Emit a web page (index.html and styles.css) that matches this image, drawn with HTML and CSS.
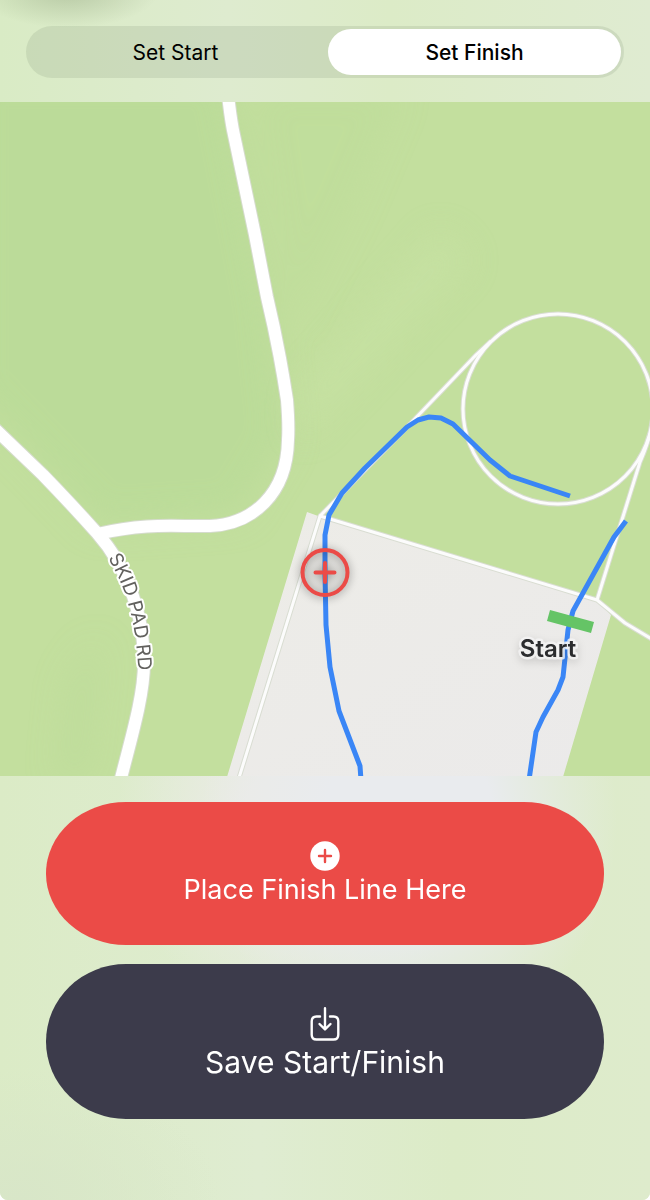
FILE: index.html
```html
<!DOCTYPE html>
<html lang="en">
  <head>
    <meta charset="UTF-8">
    <meta name="viewport" content="width=device-width, initial-scale=1">
    <title>Set Start/Finish</title>
    <link rel="stylesheet" href="styles.css">
  </head>
  <body>
    <div class="screen">
      <div class="top-bar">
        <div class="segmented" role="radiogroup" aria-label="Line to place">
          <input type="radio" name="line" id="set-start">
          <label for="set-start">Set Start</label>
          <input type="radio" name="line" id="set-finish" checked>
          <label for="set-finish">Set Finish</label>
        </div>
      </div>

      <svg class="map" viewBox="0 102 650 674" role="img" aria-label="Track map">
        <defs>
          <filter id="soft" x="-30%" y="-30%" width="160%" height="160%">
            <feGaussianBlur stdDeviation="16" />
          </filter>
          <linearGradient id="lot" x1="0" y1="0" x2="1" y2="1">
            <stop offset="0" stop-color="#edece7" />
            <stop offset="1" stop-color="#ebeaea" />
          </linearGradient>
          <path id="road-name" d="M108 558 C121 580 138 613 139 690" />
        </defs>

        <!-- terrain -->
        <rect class="grass" y="102" width="650" height="674" />
        <g class="shade" filter="url(#soft)">
          <path d="M-30 70 H225 L270 300 L285 440 L240 515 L100 525 L-30 390 Z" />
          <path d="M255 90 L400 90 L350 210 L290 330 Z" opacity=".4" />
          <path d="M70 680 L100 640 L85 776 L60 776 Z" opacity=".6" />
        </g>
        <path class="ridge" filter="url(#soft)" d="M300 440 L470 260 L440 230 L300 390 Z" />

        <polygon points="307,512 321,517 597,600 611,615 563,777 227,777" fill="url(#lot)" />

        <!-- roads: casing first, then the white on top -->
        <g class="road-casing">
          <path d="M228 95 Q231 122 234 135 L255 235 L267 297 Q279 347 287 400 Q289 425 288 440 C287 495 252 524 210 526 C177 527 150 522 97 534" />
          <path d="M-6 428 L43 475 Q73 506 97 533 C130 570 144 620 144 663 C144 695 132 735 120 782" />
        </g>
        <g class="path-casing">
          <circle cx="558" cy="409" r="95" />
          <path d="M320 516 L410 424 L476 355 L491 341" />
          <path d="M652 428 Q646 449 640 462 L597 600" />
          <path d="M238 781 L320 516 L597 600 L625 623 L655 641" />
        </g>
        <g class="road">
          <path d="M228 95 Q231 122 234 135 L255 235 L267 297 Q279 347 287 400 Q289 425 288 440 C287 495 252 524 210 526 C177 527 150 522 97 534" />
          <path d="M-6 428 L43 475 Q73 506 97 533 C130 570 144 620 144 663 C144 695 132 735 120 782" />
        </g>
        <g class="path">
          <circle cx="558" cy="409" r="95" />
          <path d="M320 516 L410 424 L476 355 L491 341" />
          <path d="M652 428 Q646 449 640 462 L597 600" />
          <path d="M238 781 L320 516 L597 600 L625 623 L655 641" />
        </g>
        <text class="road-label"><textPath href="#road-name">SKID PAD RD</textPath></text>

        <!-- recorded track -->
        <g class="track">
          <path d="M361 780 L360 766 L339 711 L330 667 L326 625 L325 572 L325 535 L329 515 L342 493 L365 468 L407 427 L418 420 L429 417 L441 418 L453 424 L490 460 L510 476 L570 496" />
          <path d="M626 521 L614 537 L573 611 L568 630 L563 677 L558 690 L543 717 L536 732 L529 780" />
        </g>

        <polygon class="start-line" points="550,610 594,622 591,633 547,621" />
        <text class="start-label" x="548" y="657">Start</text>

        <g class="crosshair">
          <circle cx="325" cy="572.5" r="22.5" />
          <path d="M315.5 572.5 H334.5 M325 563 V582" />
        </g>
      </svg>

      <div class="actions">
        <button type="button" class="place">
          <svg width="30" height="30" viewBox="0 0 30 30" aria-hidden="true">
            <circle cx="15" cy="15" r="14.7" fill="#fff" />
            <path d="M9 15 H21 M15 9 V21" stroke="#eb4b47" stroke-width="2.4" stroke-linecap="round" />
          </svg>
          <span>Place Finish Line Here</span>
        </button>
        <button type="button" class="save">
          <svg width="30" height="34" viewBox="0 0 30 34" aria-hidden="true">
            <g fill="none" stroke="#fff" stroke-width="2.4" stroke-linecap="round" stroke-linejoin="round">
              <path d="M10 9.5 H6.5 Q1.7 9.5 1.7 14.3 V27.7 Q1.7 32.5 6.5 32.5 H23.5 Q28.3 32.5 28.3 27.7 V14.3 Q28.3 9.5 23.5 9.5 H20" />
              <path d="M15 1.3 V22 M9.5 17 L15 22.4 L20.5 17" />
            </g>
          </svg>
          <span>Save Start/Finish</span>
        </button>
      </div>
    </div>
  </body>
</html>
```
FILE: styles.css
```css
* {
  box-sizing: border-box;
}
body {
  margin: 0;
  background: #fff;
  font-family: Inter, "Liberation Sans", sans-serif;
}
.screen {
  display: flex;
  flex-direction: column;
  min-height: 100vh;
  overflow: hidden;
  border-radius: 0 0 8px 8px;
  background: #ddebc9;
}

/* top bar */
.top-bar {
  padding: 26px 26px 24px;
  background:
    radial-gradient(ellipse 90px 36px at 68px -8px, rgba(120, 140, 100, 0.35), transparent),
    linear-gradient(90deg, #d9ebc5, #deebcf 35%, #dcebc7 60%, #dfebd1);
}
.segmented {
  display: grid;
  grid-template-columns: 1fr 1fr;
  gap: 6px;
  padding: 3px;
  border-radius: 26px;
  background: rgba(100, 120, 90, 0.14);
}
.segmented input {
  position: absolute;
  opacity: 0;
}
.segmented label {
  padding-top: 1px;
  border-radius: 23px;
  font-size: 21px;
  line-height: 45px;
  text-align: center;
  color: #000;
  cursor: pointer;
}
.segmented input:checked + label {
  background: #fff;
  font-weight: 500;
}

/* map */
.map {
  display: block;
  width: 100%;
  height: auto;
}
.grass {
  fill: #c3df9e;
}
.shade {
  fill: #bbdb99;
}
.ridge {
  fill: #c7e2a4;
  opacity: 0.6;
}
.road,
.path,
.road-casing,
.path-casing,
.track {
  fill: none;
  stroke-linejoin: round;
}
.road-casing {
  stroke: #d5dbcd;
  stroke-width: 14px;
}
.road {
  stroke: #fff;
  stroke-width: 12px;
}
.path-casing {
  stroke: #d9ddd2;
  stroke-width: 5px;
}
.path {
  stroke: #fcfcfc;
  stroke-width: 3px;
}
.track {
  stroke: #3a86f6;
  stroke-width: 5px;
}
.road-label {
  font-size: 19px;
  fill: #62615e;
  stroke: #fff;
  stroke-width: 4px;
  stroke-linejoin: round;
  paint-order: stroke;
}
.start-line {
  fill: #65c466;
}
.start-label {
  font-size: 24px;
  font-weight: 600;
  text-anchor: middle;
  fill: #2b2c2e;
  stroke: rgba(245, 245, 245, 0.8);
  stroke-width: 5px;
  stroke-linejoin: round;
  paint-order: stroke;
  filter: drop-shadow(0 3px 4px rgba(0, 0, 0, 0.15));
}
.crosshair {
  fill: none;
  stroke: #eb4b47;
  stroke-width: 4px;
  stroke-linecap: round;
  filter: drop-shadow(0 1px 4px rgba(0, 0, 0, 0.4));
}
.crosshair circle {
  fill: rgba(0, 0, 0, 0.04);
}

/* actions */
.actions {
  flex: 1;
  display: flex;
  flex-direction: column;
  gap: 19px;
  padding: 26px 46px 80px;
  background:
    radial-gradient(ellipse 32% 56% at 63% 10%, #e9ebee 40%, transparent),
    radial-gradient(ellipse 28% 48% at 46% 10%, #ebebe6 30%, transparent),
    radial-gradient(ellipse 200px 130px at 20px 100%, #d8e6c8, transparent),
    linear-gradient(90deg, #dbebc6, #dfecd1 40%, #dcebc7 70%, #deebcc);
}
.actions button {
  display: flex;
  flex-direction: column;
  align-items: center;
  border: 0;
  border-radius: 80px / 50%;
  font-family: inherit;
  color: #fff;
  cursor: pointer;
}
.place {
  padding: 39px 24px 36px;
  background: #eb4b47;
  font-size: 27px;
  line-height: 38px;
}
.save {
  padding: 43px 24px 36px;
  background: #3c3b4b;
  font-size: 30px;
  line-height: 42px;
}
```
